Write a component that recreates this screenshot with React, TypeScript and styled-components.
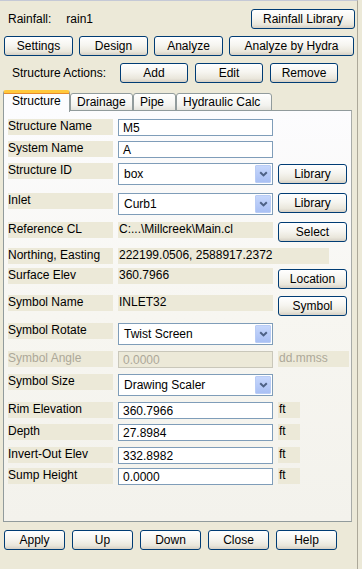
import { FC, ReactNode } from "react";
import styled, { createGlobalStyle } from "styled-components";

const GlobalStyle = createGlobalStyle`
    html, body {
        margin: 0;
        padding: 0;
        background: #ECE9D8;
    }
    body {
        font-family: "Liberation Sans", Arial, sans-serif;
        font-size: 12px;
        color: #000;
    }
`;

const Window = styled.div`
    width: 357px;
    height: 568px;
    border-top: 1px solid #C5C9D6;
    border-right: 1px solid #ACA899;
    background: #ECE9D8;
    position: relative;
`;

const TopRow = styled.div<{ top: number; height?: number }>`
    display: flex;
    align-items: center;
    margin-top: ${p => p.top}px;
    height: ${p => p.height ?? 20}px;
`;

const Caption = styled.span<{ left: number }>`
    margin-left: ${p => p.left}px;
    white-space: nowrap;
`;

const Spacer = styled.div`
    flex: 1;
`;

const Button = styled.button<{ w: number; ml?: number; h?: number }>`
    box-sizing: border-box;
    width: ${p => p.w}px;
    height: ${p => p.h ?? 20}px;
    margin-left: ${p => p.ml ?? 0}px;
    flex: none;
    padding: 0;
    border: 1px solid #003C74;
    border-radius: 3px;
    background: linear-gradient(180deg, #FFFFFF 0%, #F6F5F0 45%, #EAE7DC 80%, #D6D0C5 100%);
    font-family: "Liberation Sans", Arial, sans-serif;
    font-size: 12px;
    color: #000;
    line-height: 17px;
    white-space: nowrap;
    cursor: default;
`;

const TabStrip = styled.div`
    display: flex;
    align-items: flex-end;
    margin-top: 6px;
    margin-left: 3px;
    height: 22px;
    position: relative;
    z-index: 2;
`;

const Tab = styled.div<{ w: number; active?: boolean }>`
    box-sizing: border-box;
    width: ${p => p.w}px;
    height: ${p => (p.active ? 22 : 18)}px;
    margin-bottom: ${p => (p.active ? -1 : 0)}px;
    padding-left: ${p => (p.active ? 8 : 6)}px;
    border: 1px solid #919B9C;
    border-bottom: ${p => (p.active ? "none" : "1px solid #919B9C")};
    border-top: ${p => (p.active ? "3px solid #FFC83C" : "1px solid #919B9C")};
    border-radius: 3px 3px 0 0;
    background: ${p => (p.active ? "#FCFCFE" : "linear-gradient(180deg, #FFFFFF 0%, #F3F3EF 70%, #E4E3DC 100%)")};
    line-height: ${p => (p.active ? 17 : 16)}px;
    white-space: nowrap;
    box-shadow: ${p => (p.active ? "inset 0 1px 0 #E68B2C" : "none")};
`;

const Panel = styled.div`
    box-sizing: border-box;
    margin-left: 3px;
    width: 349px;
    height: 412px;
    margin-top: -1px;
    border: 1px solid #919B9C;
    border-right-color: #A8ABA8;
    background: linear-gradient(180deg, #FCFCFE 0%, #F7F6F1 50%, #F3F2EC 100%);
    padding: 8px 0 0 4px;
`;

const Row = styled.div<{ h: number }>`
    display: flex;
    align-items: flex-start;
    height: ${p => p.h}px;
`;

const Label = styled.div<{ disabled?: boolean }>`
    box-sizing: border-box;
    width: 105px;
    height: 16px;
    line-height: 15px;
    background: #ECE9D8;
    color: ${p => (p.disabled ? "#ACA899" : "#000")};
    white-space: nowrap;
    flex: none;
`;

const Field = styled.div<{ w?: number; disabled?: boolean }>`
    box-sizing: border-box;
    width: ${p => p.w ?? 155}px;
    height: 17px;
    margin-left: 5px;
    border: 1px solid ${p => (p.disabled ? "#C9C7BA" : "#7F9DB9")};
    background: ${p => (p.disabled ? "#ECE9D8" : "#FFFFFF")};
    color: ${p => (p.disabled ? "#ACA899" : "#000")};
    padding-left: 4px;
    line-height: 16px;
    white-space: nowrap;
    overflow: hidden;
    flex: none;
`;

const Static = styled.div<{ w?: number }>`
    box-sizing: border-box;
    width: ${p => p.w ?? 155}px;
    height: 16px;
    margin-left: 5px;
    background: #ECE9D8;
    padding-left: 1px;
    line-height: 15px;
    white-space: nowrap;
    overflow: hidden;
    flex: none;
`;

const SelectBox = styled.div`
    box-sizing: border-box;
    width: 155px;
    height: 22px;
    margin-left: 5px;
    border: 1px solid #7F9DB9;
    background: #FFFFFF;
    display: flex;
    align-items: center;
    padding: 1px;
    flex: none;
`;

const SelectText = styled.span`
    flex: 1;
    padding-left: 4px;
    line-height: 18px;
    white-space: nowrap;
`;

const DropButton = styled.div`
    box-sizing: border-box;
    width: 16px;
    height: 18px;
    border: 1px solid #B9CCF5;
    border-radius: 1px;
    background: linear-gradient(180deg, #C6D7FC 0%, #B5C9F7 60%, #A9C0F4 100%);
    display: flex;
    align-items: center;
    justify-content: center;
`;

const Unit = styled.div<{ w: number; disabled?: boolean }>`
    box-sizing: border-box;
    width: ${p => p.w}px;
    height: 16px;
    margin-left: 5px;
    background: #ECE9D8;
    color: ${p => (p.disabled ? "#ACA899" : "#000")};
    padding-left: 1px;
    line-height: 15px;
    flex: none;
`;

const SideButton = styled(Button)`
    margin-left: 5px;
`;

const Chevron = () => (
    <svg width="9" height="6" viewBox="0 0 9 6">
        <path d="M1.2 1.2 L4.5 4.4 L7.8 1.2" fill="none" stroke="#4D6185" strokeWidth="2" />
    </svg>
);

const Select: FC<{ value: string }> = ({ value }) => (
    <SelectBox>
        <SelectText>{value}</SelectText>
        <DropButton>
            <Chevron />
        </DropButton>
    </SelectBox>
);

const FormRow: FC<{ h: number; label: string; disabled?: boolean; children?: ReactNode }> = ({ h, label, disabled, children }) => (
    <Row h={h}>
        <Label disabled={disabled}>{label}</Label>
        {children}
    </Row>
);

const BottomBar = styled.div`
    display: flex;
    gap: 7px;
    margin-top: 8px;
    margin-left: 4px;
`;

const App: FC = () => {
    return (
        <Window>
            <GlobalStyle />
            <TopRow top={8}>
                <Caption left={8}>Rainfall:</Caption>
                <Caption left={15}>rain1</Caption>
                <Spacer />
                <Button w={104} style={{ marginRight: 2 }}>Rainfall Library</Button>
            </TopRow>
            <TopRow top={7}>
                <Button w={69} ml={4}>Settings</Button>
                <Button w={69} ml={6}>Design</Button>
                <Button w={69} ml={6}>Analyze</Button>
                <Button w={125} ml={6}>Analyze by Hydra</Button>
            </TopRow>
            <TopRow top={7}>
                <Caption left={12}>Structure Actions:</Caption>
                <Spacer />
                <Button w={68}>Add</Button>
                <Button w={68} ml={7}>Edit</Button>
                <Button w={68} ml={7} style={{ marginRight: 19 }}>Remove</Button>
            </TopRow>
            <TabStrip>
                <Tab w={67} active>Structure</Tab>
                <Tab w={63}>Drainage</Tab>
                <Tab w={43}>Pipe</Tab>
                <Tab w={96}>Hydraulic Calc</Tab>
            </TabStrip>
            <Panel>
                <FormRow h={22} label="Structure Name">
                    <Field>M5</Field>
                </FormRow>
                <FormRow h={22} label="System Name">
                    <Field>A</Field>
                </FormRow>
                <FormRow h={30} label="Structure ID">
                    <Select value="box" />
                    <SideButton w={69} style={{ marginTop: 1 }}>Library</SideButton>
                </FormRow>
                <FormRow h={29} label="Inlet">
                    <Select value="Curb1" />
                    <SideButton w={69}>Library</SideButton>
                </FormRow>
                <FormRow h={26} label="Reference CL">
                    <Static>C:...\Millcreek\Main.cl</Static>
                    <SideButton w={69}>Select</SideButton>
                </FormRow>
                <FormRow h={20} label="Northing, Easting">
                    <Static w={211}>222199.0506, 2588917.2372</Static>
                </FormRow>
                <FormRow h={27} label="Surface Elev">
                    <Static>360.7966</Static>
                    <SideButton w={69} style={{ marginTop: 1 }}>Location</SideButton>
                </FormRow>
                <FormRow h={28} label="Symbol Name">
                    <Static>INLET32</Static>
                    <SideButton w={69} style={{ marginTop: 1 }}>Symbol</SideButton>
                </FormRow>
                <FormRow h={28} label="Symbol Rotate">
                    <Select value="Twist Screen" />
                </FormRow>
                <FormRow h={23} label="Symbol Angle" disabled>
                    <Field disabled>0.0000</Field>
                    <Unit w={71} disabled>dd.mmss</Unit>
                </FormRow>
                <FormRow h={28} label="Symbol Size">
                    <Select value="Drawing Scaler" />
                </FormRow>
                <FormRow h={22} label="Rim Elevation">
                    <Field>360.7966</Field>
                    <Unit w={22}>ft</Unit>
                </FormRow>
                <FormRow h={23} label="Depth">
                    <Field>27.8984</Field>
                    <Unit w={22}>ft</Unit>
                </FormRow>
                <FormRow h={21} label="Invert-Out Elev">
                    <Field>332.8982</Field>
                    <Unit w={22}>ft</Unit>
                </FormRow>
                <FormRow h={22} label="Sump Height">
                    <Field>0.0000</Field>
                    <Unit w={22}>ft</Unit>
                </FormRow>
            </Panel>
            <BottomBar>
                <Button w={61}>Apply</Button>
                <Button w={61}>Up</Button>
                <Button w={61}>Down</Button>
                <Button w={61}>Close</Button>
                <Button w={61}>Help</Button>
            </BottomBar>
        </Window>
    );
};

export default App;
